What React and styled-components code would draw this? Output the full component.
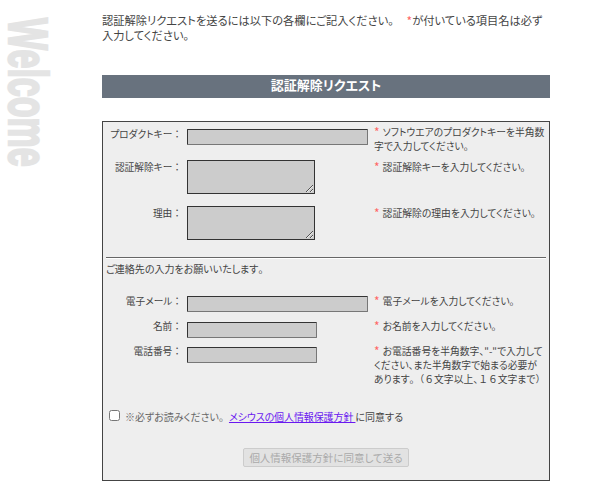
import React from "react";
import styled, { createGlobalStyle } from "styled-components";

const Global = createGlobalStyle`
  html, body { margin: 0; padding: 0; background: #fff; }
  body {
    font-family: "Noto Sans CJK JP", "Liberation Sans", sans-serif;
    font-feature-settings: "palt";
    color: #444;
  }
`;
const Page = styled.div`
  display: flex;
  width: 600px;
  height: 486px;
  overflow: hidden;
`;
const Side = styled.div`
  width: 102px;
  flex: none;
  padding: 18px 0 0 10px;
  box-sizing: border-box;
`;
const Welcome = styled.div`
  writing-mode: vertical-rl;
  font: 900 34px/38px "Liberation Sans", sans-serif;
  font-feature-settings: normal;
  color: #e4e4e4;
  -webkit-text-stroke: 1.5px #e4e4e4;
  width: 38px;
  height: 150px;
  transform: scaleX(1.65);
  white-space: nowrap;
`;
const Main = styled.div`
  width: 448px;
  flex: none;
`;
const Intro = styled.p`
  margin: 0;
  padding-top: 13px;
  font-size: 11.25px;
  line-height: 15px;
  height: 75px;
  box-sizing: border-box;
`;
const Star = styled.span`
  color: #f66;
  font-size: 12px;
  line-height: 0;
  vertical-align: -1px;
  margin: 0 ${(p) => p.$gap || 0}px 0 ${(p) => p.$lead || 0}px;
`;
const Wide = styled.span`
  font-feature-settings: normal;
`;
const Heading = styled.h2`
  margin: 0;
  height: 23px;
  background: #68727e;
  color: #fff;
  font-size: 13px;
  font-weight: 700;
  line-height: 20px;
  text-align: center;
`;
const Box = styled.div`
  margin-top: 23px;
  height: 360px;
  box-sizing: border-box;
  border: 1px solid #444;
  background: #eee;
  padding: 3px 3px 0;
  font-size: 10px;
  line-height: 14px;
`;
const Row = styled.div`
  display: grid;
  grid-template-columns: 76px 192px 1fr;
  height: ${(p) => p.$h}px;
`;
const Label = styled.label`
  text-align: right;
  font-size: 9.7px;
  line-height: 10px;
  padding-top: ${(p) => p.$top}px;
  white-space: nowrap;
`;
const Field = styled.div`
  padding: ${(p) => p.$top}px 0 0 5px;
`;
const TextInput = styled.input`
  display: block;
  width: ${(p) => p.$w}px;
  height: 16px;
  box-sizing: border-box;
  margin: 0;
  padding: 0;
  background: #ccc;
  border: 1px solid;
  border-color: #333 #777 #777 #333;
  border-radius: 1px;
`;
const TextArea = styled.textarea`
  display: block;
  width: 128px;
  height: 34px;
  box-sizing: border-box;
  margin: 0;
  padding: 0;
  background: #ccc;
  border: 1px solid #333;
  border-radius: 0;
`;
const Note = styled.div`
  font-size: 9.8px;
`;
const Divider = styled.hr`
  margin: 0;
  border: 0;
  border-top: 1px solid #666;
  border-bottom: 1px solid #fff;
`;
const Contact = styled.p`
  margin: 3px 0 0;
  height: 32px;
`;
const Agree = styled.div`
  display: flex;
  height: 16px;
  padding-left: 3px;
  line-height: 16px;
`;
const Check = styled.input`
  width: 11px;
  height: 11px;
  margin: 1px 5px 0 0;
`;
const Caution = styled.span`
  color: #666;
`;
const PolicyLink = styled.a`
  color: #6a18f0;
  text-decoration: underline;
  white-space: pre;
  letter-spacing: -0.1px;
`;
const Actions = styled.div`
  display: flex;
  justify-content: center;
  margin-top: 23px;
`;
const Submit = styled.button`
  width: 166px;
  height: 19px;
  padding: 0;
  font: inherit;
  font-feature-settings: inherit;
  font-size: 10.5px;
  line-height: 15px;
  color: #aaa;
  background: #e2e2e2;
  border: 1px solid #ccc;
  border-radius: 2px;
  white-space: nowrap;
`;

// Most punctuation and the full-width digits keep their full em in the reference, kana do not.
const T = ({ children }) =>
  children.split(/([：。（）６１])/).map((part, i) =>
    i % 2 ? <Wide key={i}>{part}</Wide> : part
  );

const Req = ({ children }) => (
  <Note>
    <Star $gap={3}>*</Star>
    <T>{children}</T>
  </Note>
);

export default function App() {
  return (
    <Page>
      <Global />
      <Side>
        <Welcome>Welcome</Welcome>
      </Side>
      <Main>
        <Intro>
          <T>認証解除リクエストを送るには以下の各欄にご記入ください。</T>
          <Star $lead={7}>*</Star>
          <T>が付いている項目名は必ず入力してください。</T>
        </Intro>
        <Heading>認証解除リクエスト</Heading>
        <Box>
          <Row $h={35}>
            <Label $top={4}><T>プロダクトキー：</T></Label>
            <Field $top={4}><TextInput $w={181} /></Field>
            <Req>ソフトウエアのプロダクトキーを半角数字で入力してください。</Req>
          </Row>
          <Row $h={46}>
            <Label $top={2}><T>認証解除キー：</T></Label>
            <Field $top={0}><TextArea /></Field>
            <Req>認証解除キーを入力してください。</Req>
          </Row>
          <Row $h={51}>
            <Label $top={2}><T>理由：</T></Label>
            <Field $top={0}><TextArea /></Field>
            <Req>認証解除の理由を入力してください。</Req>
          </Row>
          <Divider />
          <Contact><T>ご連絡先の入力をお願いいたします。</T></Contact>
          <Row $h={25}>
            <Label $top={2}><T>電子メール：</T></Label>
            <Field $top={2}><TextInput $w={181} /></Field>
            <Req>電子メールを入力してください。</Req>
          </Row>
          <Row $h={25}>
            <Label $top={2}><T>名前：</T></Label>
            <Field $top={3}><TextInput $w={130} /></Field>
            <Req>お名前を入力してください。</Req>
          </Row>
          <Row $h={65}>
            <Label $top={2}><T>電話番号：</T></Label>
            <Field $top={3}><TextInput $w={130} /></Field>
            <Req>お電話番号を半角数字、"-"で入力してください、また半角数字で始まる必要があります。（６文字以上、１６文字まで）</Req>
          </Row>
          <Agree>
            <Check type="checkbox" />
            <Caution><T>※必ずお読みください。</T></Caution>
            <PolicyLink href="#">メシウスの個人情報保護方針 </PolicyLink>
            <span>に同意する</span>
          </Agree>
          <Actions>
            <Submit disabled>個人情報保護方針に同意して送る</Submit>
          </Actions>
        </Box>
      </Main>
    </Page>
  );
}
